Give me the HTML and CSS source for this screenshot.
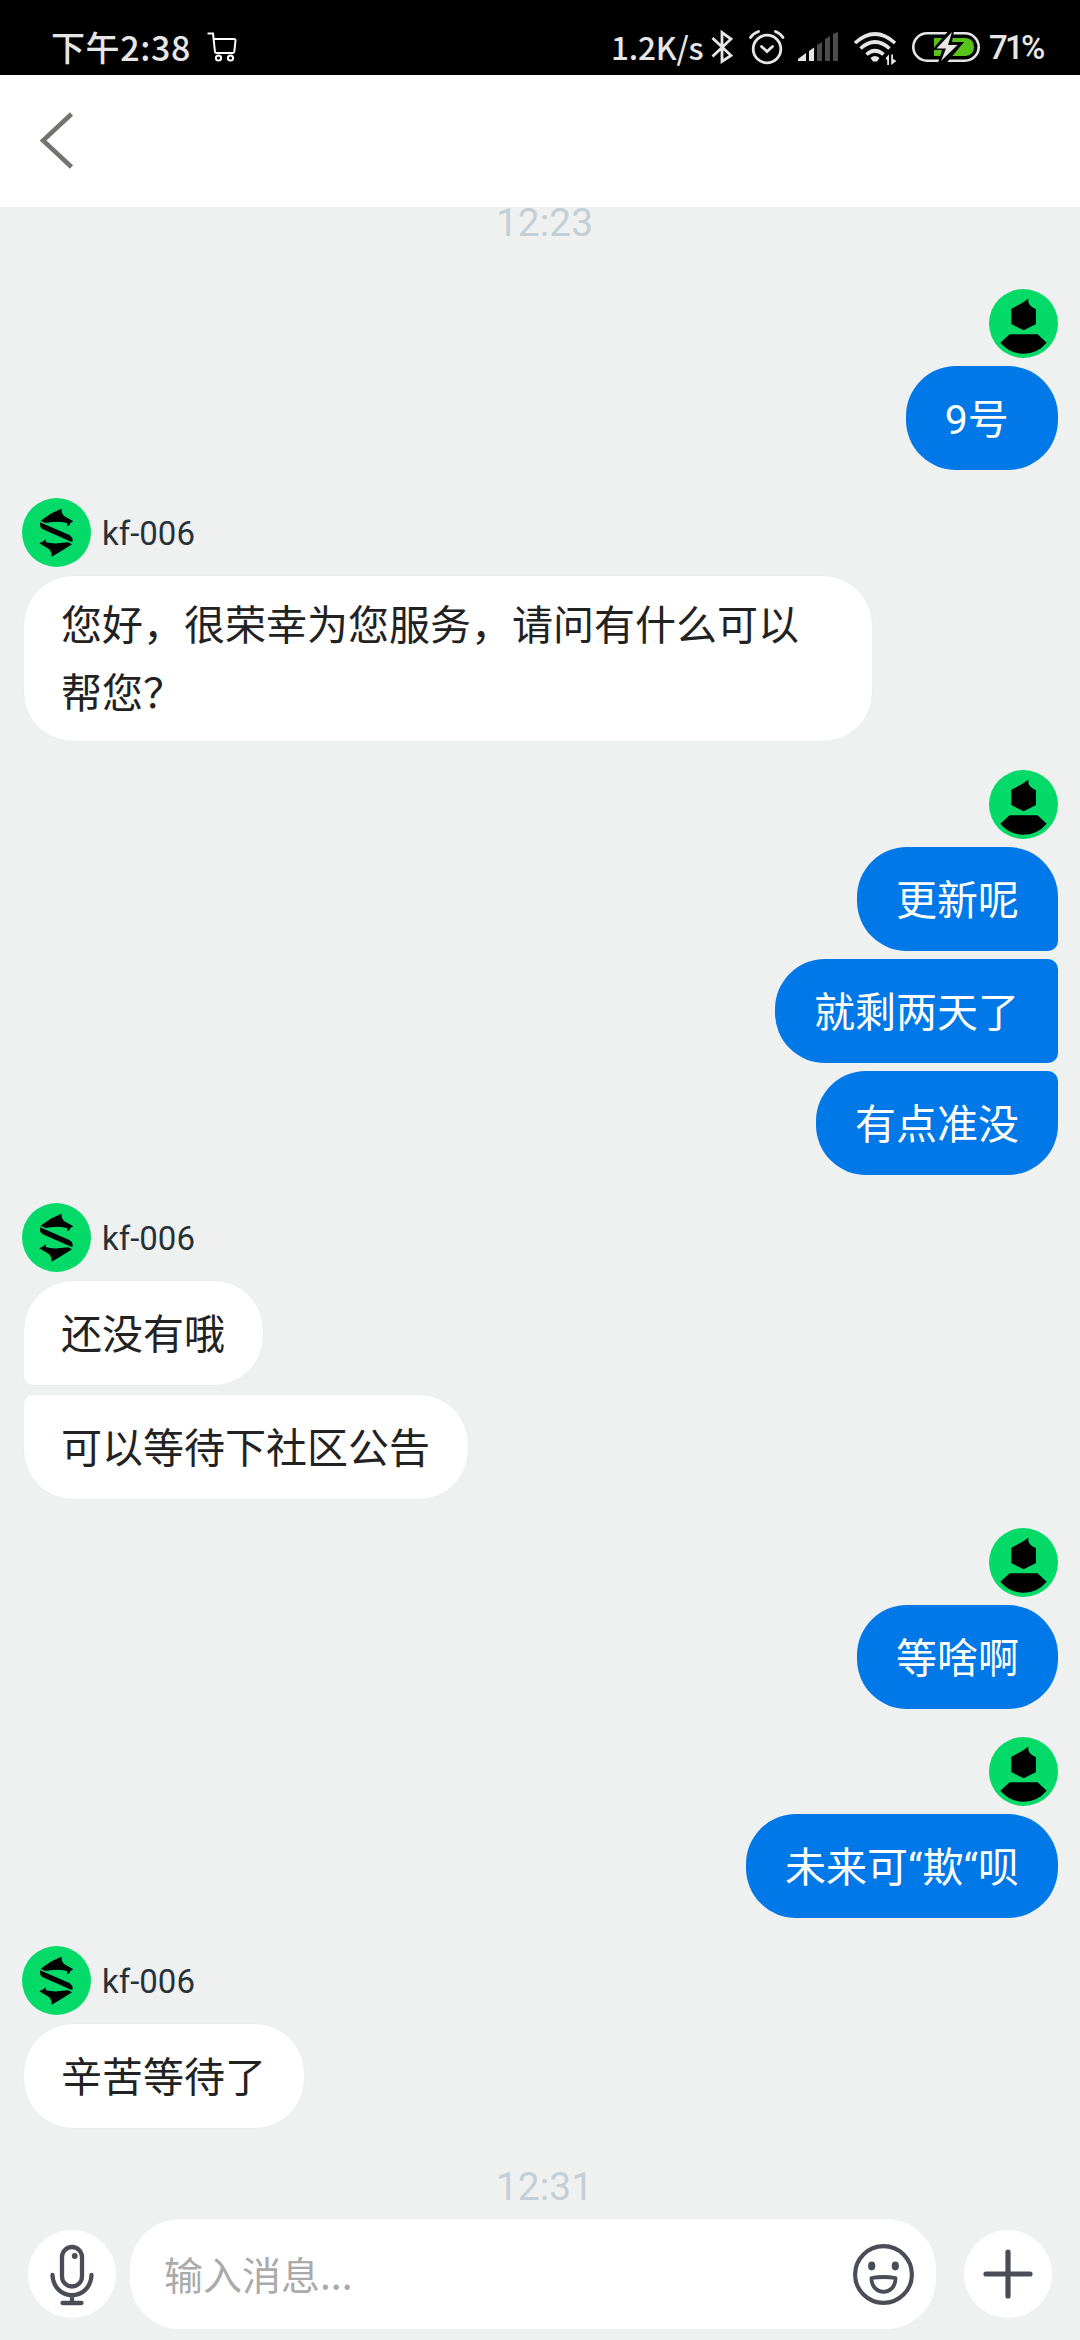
FILE: index.html
```html
<!DOCTYPE html>
<html lang="zh-CN">
<head>
<meta charset="utf-8">
<title>kf-006</title>
<link rel="stylesheet" href="styles.css">
</head>
<body>
<svg class="defs" width="0" height="0">
  <symbol id="user" viewBox="0 0 207 207">
    <circle cx="103.500" cy="103.500" r="103.500" fill="#03da68"/>
    <path d="M118 29Q98 44 67 59V105L104 124 141 105V61Q118 49 118 38ZM62 136H146L173 161Q145 194 104 194T34 161Z"/>
  </symbol>
  <symbol id="agent" viewBox="66 54 207 207">
    <circle cx="169.500" cy="157.500" r="103.500" fill="#03da68"/>
    <path d="M122 122L152 101 184 86Q184 99 192 108L220 124 212 128 208 136 200 138 203 130Q185 123 160 126 145 128 136 129ZM120 127L208 165Q217 170 218 178L217 187 132 149Q120 144 120 135ZM138 177L137 186Q150 191 175 190L204 187 216 193 184 213 155 230Q156 217 148 208L118 190 130 184Z"/>
  </symbol>
</svg>
<div class="phone">
  <div class="status">
    <span class="clock">下午2:38</span>
    <svg class="cart" viewBox="206 0 32 75" width="32" height="75" fill="none" stroke="#fff" stroke-width="2"><path d="M207.500 33.500h5.500l2 18.500q.3 1 1.300 1h16.500q1.300 0 1.500-1.300l1.200-11q.1-1.700-1.500-1.700h-19.500"/><circle cx="218.500" cy="58" r="2.600"/><circle cx="230.500" cy="58" r="2.600"/></svg>
    <span class="rate">1.2K/s</span>
    <svg viewBox="710 0 26 75" width="26" height="75" fill="none" stroke="#e6e6e6" stroke-width="2.800"><path d="M712.500 38L731 55.500 722 61.500V32.500L731 39 712.500 56.500"/></svg>
    <svg class="alarm" viewBox="748 0 37 75" width="37" height="75" fill="none" stroke="#e6e6e6" stroke-width="2.800" stroke-linecap="round"><circle cx="767" cy="49" r="13.800"/><path d="M761.500 46.500L767 51.500 772.500 46.500M750.500 37.500Q753 33.500 758.500 31.500M783 37.500Q780.500 33.500 775.500 31.500"/></svg>
    <svg class="signal" viewBox="798 0 41 75" width="41" height="75"><path fill="#e6e6e6" d="M798 61v-2l8-6v8ZM809 61V51l5-3.500V61Z"/><path fill="#4b4b4b" d="M817 61V45l5-3v19ZM825 61V39l5-3v25ZM833 61V34l5-2v29Z"/></svg>
    <svg class="wifi" viewBox="853 0 45 75" width="45" height="75"><g fill="none" stroke="#e6e6e6" stroke-width="3.600"><path d="M855 43Q875 25 895 43M860.500 48.500Q875 35.500 889.500 48.500M866.500 54.500Q875 47 883.500 54.500"/></g><path fill="#e6e6e6" d="M870.500 58Q875 54 879.500 58L877 61.500H873ZM889 54.500V65h-1.800v-4.500L885.500 58ZM891.200 65V54.500h1.800v4.500l3.500 2Z"/></svg>
    <svg class="battery" viewBox="911 0 70 75" width="70" height="75"><rect x="913.300" y="33.300" width="65.400" height="27.400" rx="13.700" fill="none" stroke="#e6e6e6" stroke-width="2.600"/><path fill="#58c41b" d="M934 38H966Q974 39 974 47T966 56H934Z"/><path d="M950 29L954 31 952 42H964L944 66 938 63 942 50H932Z"/><path fill="#e6e6e6" d="M952 32L936.500 48.500H946L941 61 957.500 45H948Z"/></svg>
    <span class="percent">71%</span>
  </div>
  <header class="header">
    <svg width="34" height="58" viewBox="40 112 34 58" fill="none" stroke="#73736f" stroke-width="4.600"><path d="M71.500 114L43 140.500 71.500 167"/></svg>
  </header>
  <main class="chat">
    <time class="time">12:23</time>
    <section class="group me">
      <svg class="avatar"><use href="#user"/></svg>
      <div class="bubble spaced">9号 </div>
    </section>
    <section class="group agent">
      <div class="sender"><svg class="avatar"><use href="#agent"/></svg><span>kf-006</span></div>
      <div class="bubble">您好，很荣幸为您服务，请问有什么可以帮您？</div>
    </section>
    <section class="group me">
      <svg class="avatar"><use href="#user"/></svg>
      <div class="bubble">更新呢</div>
      <div class="bubble">就剩两天了</div>
      <div class="bubble">有点准没</div>
    </section>
    <section class="group agent">
      <div class="sender"><svg class="avatar"><use href="#agent"/></svg><span>kf-006</span></div>
      <div class="bubble">还没有哦</div>
      <div class="bubble">可以等待下社区公告</div>
    </section>
    <section class="group me">
      <svg class="avatar"><use href="#user"/></svg>
      <div class="bubble">等啥啊</div>
    </section>
    <section class="group me">
      <svg class="avatar"><use href="#user"/></svg>
      <div class="bubble">未来可“欺“呗</div>
    </section>
    <section class="group agent">
      <div class="sender"><svg class="avatar"><use href="#agent"/></svg><span>kf-006</span></div>
      <div class="bubble">辛苦等待了</div>
    </section>
    <time class="time last">12:31</time>
  </main>
  <footer class="composer">
    <div class="round"><svg viewBox="28 2230 88 88" width="88" height="88" fill="none" stroke="#4a4d57" stroke-width="4.300" stroke-linecap="round"><rect x="62" y="2247" width="20" height="39.500" rx="10"/><path d="M52.500 2275C54 2302 90 2302 91.500 2275M72 2296v6M62.500 2303h19"/><circle cx="74.700" cy="2256" r="2.900" fill="#4a4d57" stroke="none"/></svg></div>
    <div class="field"><span>输入消息...</span>
      <svg viewBox="852 2242 63 63" width="63" height="63" fill="none" stroke="#4a4d57" stroke-width="4.200"><circle cx="883.500" cy="2273.500" r="28.400"/><path stroke-width="3.800" stroke-linejoin="round" d="M871.500 2277Q883.500 2275 895.500 2277C895.500 2295.500 871.500 2295.500 871.500 2277Z"/><g fill="#4a4d57" stroke="none"><ellipse cx="871.700" cy="2265" rx="3.600" ry="4.400"/><ellipse cx="895.300" cy="2265" rx="3.600" ry="4.400"/></g></svg>
    </div>
    <div class="round plus"><svg viewBox="0 0 88 88" width="88" height="88" stroke="#4a4d57" stroke-width="5.200" stroke-linecap="round"><path d="M22 44H66M44 22V66"/></svg></div>
  </footer>
</div>
</body>
</html>
```
FILE: styles.css
```css
* { box-sizing: border-box; }
body { margin: 0; }
svg { display: block; flex: none; }
.defs { position: absolute; }
.phone {
  width: 1080px;
  height: 2340px;
  display: flex;
  flex-direction: column;
  overflow: hidden;
  background: #eff1f1;
  font-family: Roboto, "Noto Sans CJK SC", sans-serif;
}
.status {
  flex: none;
  height: 75px;
  display: flex;
  padding-left: 51px;
  background: #000;
  color: #e6e6e6;
  white-space: nowrap;
}
.clock {
  width: 155px;
  font: 500 34px/75px "Noto Sans CJK SC", sans-serif;
  letter-spacing: 0.6px;
  padding-top: 9px;
  height: 75px;
}
.rate {
  margin-left: auto;
  width: 99px;
  padding-top: 9px;
  font: 500 31.5px/75px "Noto Sans CJK SC", sans-serif;
  letter-spacing: -0.2px;
}
.alarm { margin-left: 12px; }
.signal { margin-left: 13px; }
.wifi { margin-left: 14px; }
.battery { margin-left: 13px; }
.percent {
  width: 99px;
  padding: 10px 0 0 8px;
  font: 500 33px/75px Roboto, sans-serif;
  letter-spacing: -2.8px;
}
.header {
  flex: none;
  height: 132px;
  display: flex;
  align-items: center;
  padding-left: 40px;
  background: #fff;
}
.chat {
  flex: none;
  height: 2012px;
  display: flex;
  flex-direction: column;
  gap: 28px;
}
.time {
  flex: none;
  margin: 0 0 16px;
  padding-left: 9px;
  text-align: center;
  font-size: 39px;
  height: 38px;
  line-height: 33px;
  color: #c3cfd6;
}
.time.last { margin: 14px 0 0; }
.group {
  display: flex;
  flex-direction: column;
  gap: 8px;
  padding: 0 22px;
}
.avatar { width: 69px; height: 69px; }
.sender {
  display: flex;
  align-items: center;
  gap: 11px;
  font-size: 33px;
  color: #263238;
}
.sender span { padding-top: 2px; }
.bubble {
  min-height: 104px;
  max-width: 850px;
  display: flex;
  align-items: center;
  padding: 16px 39px 13px;
  border-radius: 50px;
  font-size: 41px;
  line-height: 68px;
}
.me { align-items: flex-end; }
.me .bubble { background: #0078e7; color: #fff; }
.me .bubble:not(:last-child) { border-bottom-right-radius: 10px; }
.me .bubble + .bubble { border-top-right-radius: 10px; }
.agent { align-items: flex-start; }
.agent .bubble {
  min-height: 106px;
  margin-left: 1px;
  padding: 16px 38px 13px 37px;
  border: 1px solid #eaeded;
  background: #fff;
  color: #222;
}
.agent .bubble:not(:last-child) { border-bottom-left-radius: 10px; }
.agent .bubble + .bubble { border-top-left-radius: 10px; }
.spaced { white-space: pre-wrap; }
.composer {
  flex: none;
  height: 110px;
  display: flex;
  align-items: center;
  padding: 0 28px;
}
.round {
  width: 88px;
  height: 88px;
  border-radius: 50%;
  background: #fff;
}
.field {
  width: 806px;
  height: 110px;
  margin: 0 28px 0 14px;
  padding: 0 21px 0 34px;
  display: flex;
  align-items: center;
  justify-content: space-between;
  border-radius: 50px;
  background: #fff;
  color: #aaa;
  font: 39px/60px "Noto Sans CJK SC", sans-serif;
}
.field span { padding-bottom: 3px; }
```
